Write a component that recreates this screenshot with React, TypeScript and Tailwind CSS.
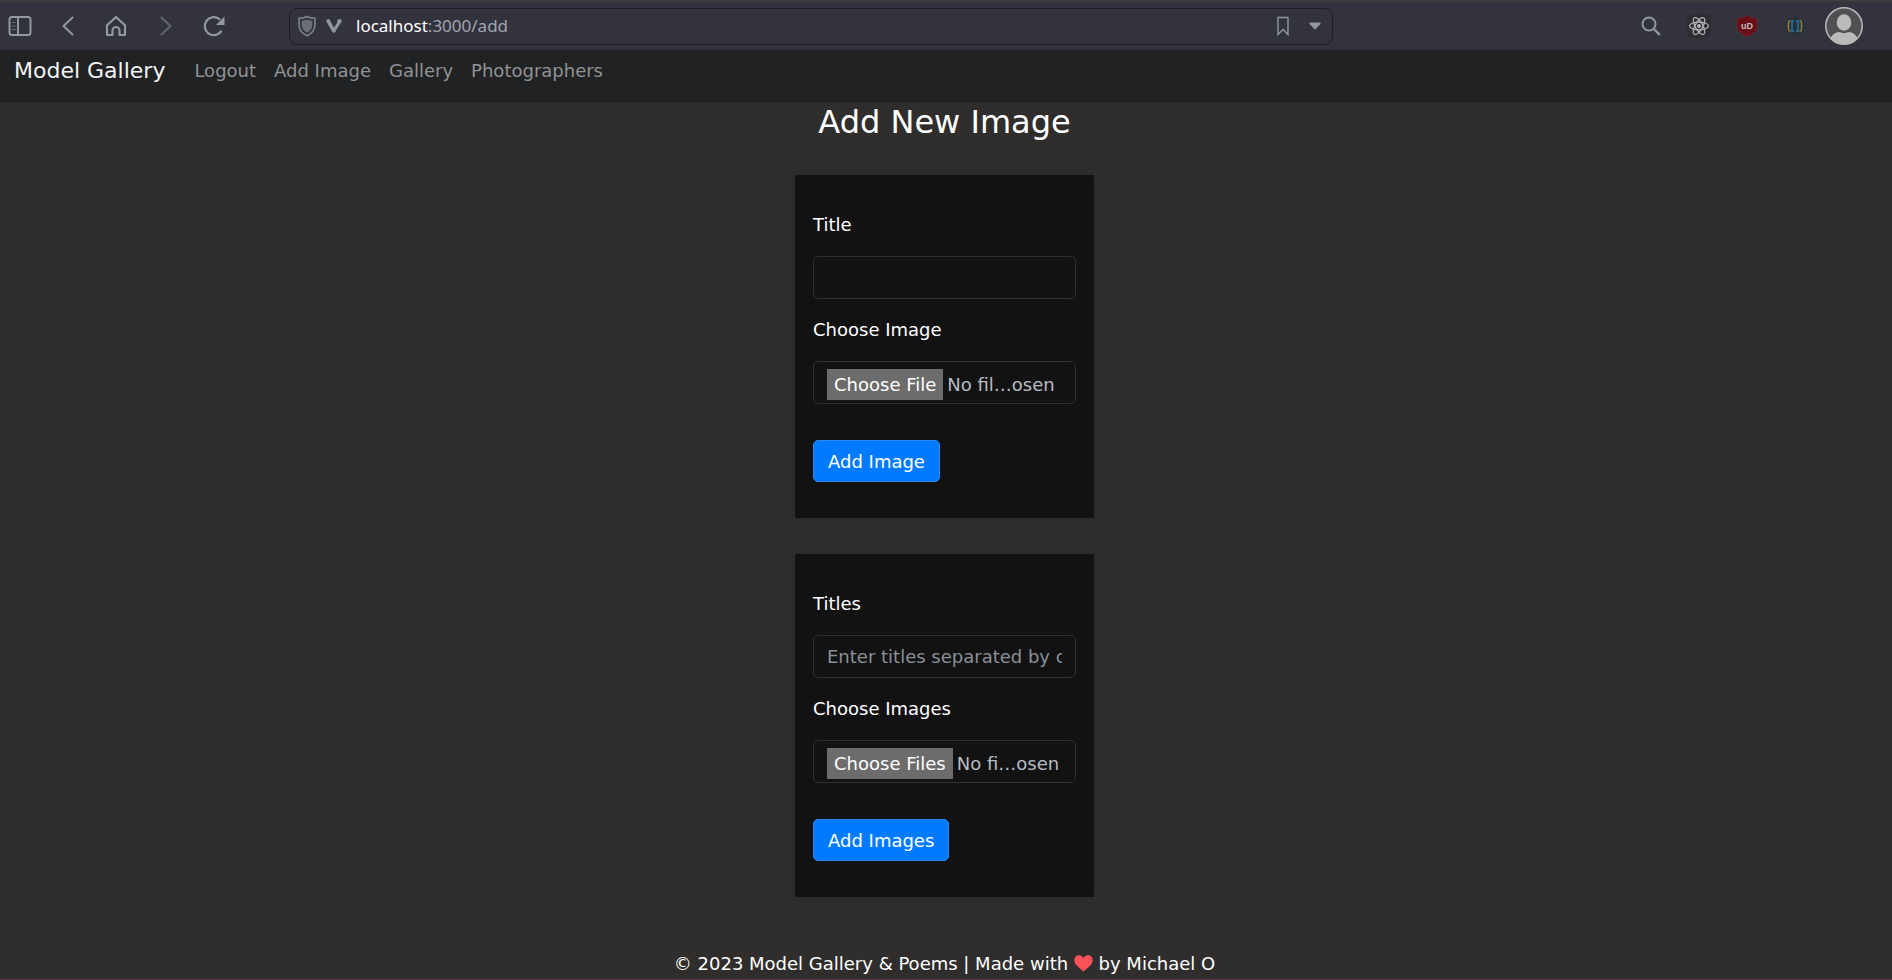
import React from "react";

function ToolButton({ label, className, children }: { label: string; className: string; children: React.ReactNode }) {
  return (
    <button type="button" aria-label={label} className={`flex h-6 w-6 shrink-0 items-center justify-center ${className}`}>
      {children}
    </button>
  );
}

function SidebarIcon() {
  return (
    <svg width="24" height="22" viewBox="0 0 24 22" fill="none" stroke="currentColor" strokeWidth="2">
      <rect x="1.5" y="2" width="21" height="18" rx="2.5" />
      <path d="M10 2v18" />
      <path d="M4 7.5h3.5M4 11h3.5M4 14.5h3.5" strokeWidth="1.2" opacity="0.6" />
    </svg>
  );
}

function BackIcon() {
  return (
    <svg width="24" height="24" viewBox="0 0 24 24" fill="none" stroke="currentColor" strokeWidth="2" strokeLinecap="round" strokeLinejoin="round">
      <path d="M16.5 3.5 7.5 12l9 8.5" />
    </svg>
  );
}

function ForwardIcon() {
  return (
    <svg width="24" height="24" viewBox="0 0 24 24" fill="none" stroke="currentColor" strokeWidth="2" strokeLinecap="round" strokeLinejoin="round">
      <path d="m7.5 3.5 9 8.500-9 8.500" />
    </svg>
  );
}

function HomeIcon() {
  return (
    <svg width="24" height="24" viewBox="0 0 24 24" fill="none" stroke="currentColor" strokeWidth="2.200" strokeLinecap="round" strokeLinejoin="round">
      <path d="M3 11.200 12 3l9 8.200V21h-5.500v-4.500a3.500 3.500 0 0 0-7 0V21H3z" />
    </svg>
  );
}

function ReloadIcon() {
  return (
    <svg width="24" height="24" viewBox="0 0 24 24" fill="none">
      <path d="M17.500 5.200A9 9 0 1 0 19 17.500" stroke="currentColor" strokeWidth="2.200" strokeLinecap="round" />
      <path d="M22.500 2.500v8.500h-8.500z" fill="currentColor" />
    </svg>
  );
}

function ShieldIcon() {
  return (
    <svg width="18" height="22" viewBox="0 0 18 22">
      <path d="M9 1.500c2.500 1.300 5 1.800 8 1.800v6.200c0 5.500-3.500 9.200-8 11.300-4.500-2.100-8-5.800-8-11.300V3.300c3 0 5.500-.5 8-1.800z" fill="none" stroke="#7d818b" strokeWidth="1.600" />
      <path d="M9 4.500c1.700.8 3.400 1.200 5.300 1.300v4c0 3.700-2.100 6.200-5.300 8-3.200-1.800-5.300-4.300-5.300-8v-4C5.600 5.700 7.300 5.300 9 4.500z" fill="#6b6e77" />
    </svg>
  );
}

function SiteMark() {
  return (
    <svg width="16" height="16" viewBox="0 0 16 16" fill="none" stroke="#9095a0" strokeLinecap="round" strokeLinejoin="round">
      <path d="M2.200 3 7.800 12.800" strokeWidth="3.600" />
      <path d="M7.800 12.800 11.500 7.200Q12.200 6 13 4.500" strokeWidth="3" />
      <circle cx="13.400" cy="3.200" r="2.200" fill="#9095a0" stroke="none" />
    </svg>
  );
}

function BrowserBar() {
  return (
    <div className="flex h-[51px] items-center border-t-2 border-b border-t-[#3c3c3c] border-b-[#1c1c22] bg-[#33333e] pl-2 text-[#9297a1]">
      <div className="flex items-center gap-6">
        <ToolButton label="Sidebar" className=""><SidebarIcon /></ToolButton>
        <ToolButton label="Back" className=""><BackIcon /></ToolButton>
        <ToolButton label="Home" className=""><HomeIcon /></ToolButton>
        <ToolButton label="Forward" className="ml-0.5 text-[#62656f]"><ForwardIcon /></ToolButton>
        <ToolButton label="Reload" className=""><ReloadIcon /></ToolButton>
      </div>
      <div className="ml-[63px] flex h-[37px] min-w-0 flex-1 items-center rounded-lg border border-[#1d1d27] bg-[#33333e] pr-[5px] pl-2">
        <ShieldIcon />
        <span className="ml-2.5"><SiteMark /></span>
        <p className="ml-3.5 flex-1 font-['Noto_Sans',sans-serif] text-[17px] leading-6 text-[#a1a5ae]">
          <span className="text-white">localhost</span>:3000/add
        </p>
        <ToolButton label="Bookmark" className="">
          <svg width="24" height="24" viewBox="0 0 24 24" fill="none" stroke="currentColor" strokeWidth="1.400">
            <path d="M7 3.500h10v17L12 15.500l-5 5z" />
          </svg>
        </ToolButton>
        <ToolButton label="Show history" className="ml-2">
          <svg width="12" height="8" viewBox="0 0 12 8" fill="currentColor"><path d="M1 .5h10q1 .5.5 1.500L6 7.800.500 2Q0 1 1 .5z" /></svg>
        </ToolButton>
      </div>
      <div className="ml-[306px] flex items-center gap-6 pr-[29px]">
        <ToolButton label="Search" className="">
          <svg width="22" height="22" viewBox="0 0 22 22" fill="none" stroke="currentColor" strokeWidth="2">
            <circle cx="9" cy="9" r="6.500" /><path d="m13.800 13.800 6 6" strokeWidth="2.400" />
          </svg>
        </ToolButton>
        <ToolButton label="React tools" className="rounded-sm bg-[#2d2e33]">
          <svg width="22" height="22" viewBox="0 0 22 22" fill="none" stroke="#b4b4b8" strokeWidth="1.200">
            <ellipse cx="11" cy="11" rx="9.500" ry="3.800" />
            <ellipse cx="11" cy="11" rx="9.500" ry="3.800" transform="rotate(60 11 11)" />
            <ellipse cx="11" cy="11" rx="9.500" ry="3.800" transform="rotate(120 11 11)" />
            <circle cx="11" cy="11" r="2" fill="#b4b4b8" stroke="none" />
          </svg>
        </ToolButton>
        <ToolButton label="Content blocker" className="">
          <svg width="22" height="22" viewBox="0 0 22 22">
            <path d="M11 .5c3 1.800 6.200 2.800 10 3v8c0 5-4.500 7.500-10 10.300C5.500 19 1 16.500 1 11.500v-8c3.800-.2 7-1.200 10-3z" fill="#670f14" stroke="#7a2c30" strokeWidth=".7" />
            <text x="11" y="13.500" textAnchor="middle" fontFamily="Liberation Sans, sans-serif" fontWeight="700" fontSize="9" fill="#c3bcbe">uD</text>
          </svg>
        </ToolButton>
        <ToolButton label="JSON viewer" className="">
          <svg width="22" height="22" viewBox="0 0 22 22" fill="none" strokeWidth="1.400">
            <circle cx="11" cy="11" r="10" fill="#29323a" />
            <path d="M6.500 6H5.800Q4.600 6 4.600 7.200v2.300q0 1.500-1.200 1.500 1.200 0 1.200 1.500v2.300Q4.600 16 5.800 16h.7M15.500 6h.7q1.200 0 1.200 1.200v2.300q0 1.500 1.200 1.500-1.200 0-1.200 1.500v2.300q0 1.200-1.200 1.200h-.7" stroke="#9a7f35" />
            <path d="M10 6H8v10h2M12 6h2v10h-2" stroke="#2377b5" />
          </svg>
        </ToolButton>
        <button type="button" aria-label="Profile" className="-ml-1.5 h-[38px] w-[38px] shrink-0">
          <svg width="38" height="38" viewBox="0 0 38 38">
            <defs><clipPath id="face"><circle cx="19" cy="19" r="18" /></clipPath></defs>
            <circle cx="19" cy="19" r="18.200" fill="#4f5052" />
            <g clipPath="url(#face)" fill="#b9babc">
              <ellipse cx="19" cy="15.500" rx="7.300" ry="8.300" />
              <path d="M4 38c0-8 5-13 10.500-13 3 1.500 6 1.500 9 0C29 25 34 30 34 38z" />
            </g>
            <circle cx="19" cy="19" r="18.200" fill="none" stroke="#b9babc" strokeWidth="1.500" />
          </svg>
        </button>
      </div>
    </div>
  );
}

function SiteNav() {
  return (
    <nav className="flex h-[51px] items-start bg-[#202224] px-3.5 pt-1.5">
      <a href="#home" className="text-[22px] leading-7 text-[#f4f4f4]">Model Gallery</a>
      <ul className="ml-[29px] flex gap-[18px] leading-7 text-[#919293]">
        <li><a href="#logout">Logout</a></li>
        <li><a href="#add">Add Image</a></li>
        <li><a href="#gallery">Gallery</a></li>
        <li><a href="#photographers">Photographers</a></li>
      </ul>
    </nav>
  );
}

type UploadFormProps = {
  id: string;
  titleLabel: string;
  fileLabel: string;
  submitLabel: string;
  placeholder?: string;
  multiple?: boolean;
};

function UploadForm({ id, titleLabel, fileLabel, submitLabel, placeholder, multiple }: UploadFormProps) {
  return (
    <form className="flex flex-col items-start bg-[#121212] px-[18px] py-9 shadow-[0_0_9px_rgba(0,0,0,0.12)]" onSubmit={(e) => e.preventDefault()}>
      <label htmlFor={`${id}-title`}>{titleLabel}</label>
      <input
        id={`${id}-title`}
        type="text"
        placeholder={placeholder}
        className="mt-[18px] h-[43px] w-full rounded-[5px] border border-[#303030] bg-transparent px-[13px] placeholder:text-[#8a9097] placeholder:opacity-100"
      />
      <label htmlFor={`${id}-file`} className="mt-[17px]">{fileLabel}</label>
      <input
        id={`${id}-file`}
        type="file"
        multiple={multiple}
        className="mt-[18px] h-[43px] w-full rounded-[5px] border border-[#303030] px-[13px] pt-[7px] text-[#b6bcc3] file:bg-[#6c6c6c] file:px-[7px] file:py-0.5 file:text-white"
      />
      <button type="submit" className="mt-9 h-[42px] rounded-[5px] border border-[#2f88f0] bg-[#007bff] px-3.5 text-white">
        {submitLabel}
      </button>
    </form>
  );
}

export default function App() {
  return (
    <div className="flex min-h-screen flex-col border-b border-[#56394f] bg-[#302e2d] font-['DejaVu_Sans',sans-serif] text-[18px] leading-[27px] text-white">
      <BrowserBar />
      <SiteNav />
      <main className="flex flex-col items-center pr-[3px]">
        <h1 className="text-[32px] leading-10">Add New Image</h1>
        <div className="mt-[33px] flex w-[299px] flex-col gap-9">
          <UploadForm id="single" titleLabel="Title" fileLabel="Choose Image" submitLabel="Add Image" />
          <UploadForm id="batch" titleLabel="Titles" fileLabel="Choose Images" submitLabel="Add Images" placeholder="Enter titles separated by commas" multiple />
        </div>
      </main>
      <footer className="mt-auto pr-[3px] pb-0.5 text-center">
        © 2023 Model Gallery &amp; Poems | Made with{" "}
        <svg role="img" aria-label="love" className="inline-block align-[-2px]" width="19" height="17" viewBox="0 0 19 17">
          <path d="M9.500 16.800C7.500 13.800.3 10.500.3 5.300.3 2.300 2.500.3 5 .3c2 0 3.600 1.200 4.500 3 .9-1.800 2.500-3 4.500-3 2.500 0 4.700 2 4.700 5 0 5.200-7.200 8.500-9.200 11.500z" fill="#fb5158" />
        </svg>{" "}
        by Michael O
      </footer>
    </div>
  );
}
